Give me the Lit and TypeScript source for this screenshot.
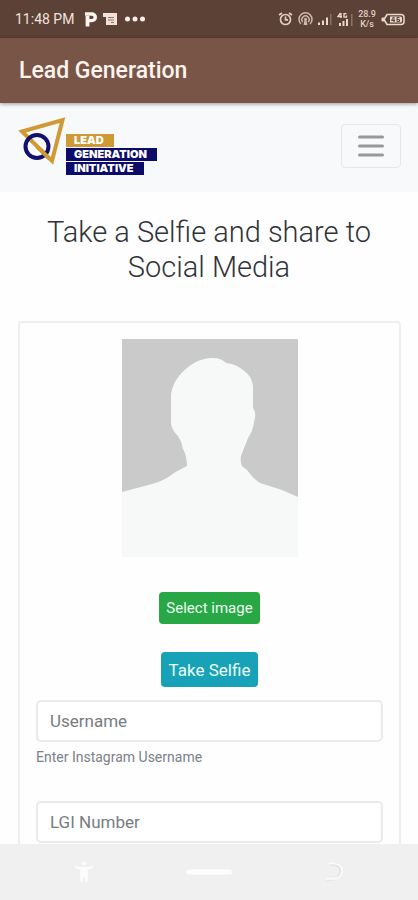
import { LitElement, html, css } from "lit";
import { customElement } from "lit/decorators.js";

@customElement("status-bar")
class StatusBar extends LitElement {
  static styles = css`
    :host {
      display: flex;
      justify-content: space-between;
      align-items: center;
      height: 38px;
      padding: 0 13px 0 15px;
      background: #5b4136;
      color: #f1e3dc;
      font-size: 14px;
    }
    .group { display: flex; align-items: center; gap: 6px; }
    .time { margin-right: 4px; }
    .right { gap: 5px; }
    .rate {
      font-size: 9px;
      line-height: 10px;
      font-weight: 500;
      text-align: center;
      color: #e0cec5;
    }
    svg { display: block; }
  `;
  render() {
    return html`
      <div class="group">
        <span class="time">11:48 PM</span>
        <svg width="13" height="15" viewBox="0 0 13 15" aria-hidden="true">
          <path d="M1 2H8a3.300 3.300 0 0 1 0 6.600H5" fill="none" stroke="#fff5ee" stroke-width="3.400" />
          <path d="M3.500 4v10.500" stroke="#fff5ee" stroke-width="3.800" />
        </svg>
        <svg width="14" height="13" viewBox="0 0 14 13" aria-hidden="true">
          <path d="M0 0h14v12H3V4H0z" fill="#f1e3dc" />
          <path d="M5 4.500h6M5 7h6M8 9.500h3" stroke="#8b6e60" stroke-width="1.200" />
        </svg>
        <svg width="24" height="6" viewBox="0 0 24 6" aria-hidden="true">
          <g fill="#fbeee6"><circle cx="4.500" cy="3" r="2.500" /><circle cx="12" cy="3" r="2.500" /><circle cx="19.500" cy="3" r="2.500" /></g>
        </svg>
      </div>
      <div class="group right">
        <svg width="15" height="14" viewBox="0 0 15 14" fill="none" stroke="#e0cec5" stroke-width="1.700" aria-hidden="true">
          <circle cx="7.500" cy="7.500" r="5" /><path d="M7.500 4.500v3.300h2.500M1 3l3-2M14 3l-3-2" />
        </svg>
        <svg width="15" height="14" viewBox="0 0 15 14" fill="none" stroke="#cdb9af" stroke-width="1.500" aria-hidden="true">
          <path d="M3 12a6.500 6.500 0 1 1 9 0M4.800 10a3.600 3.600 0 1 1 5.400 0" />
          <path d="M5.500 13l1-4.500a1.500 1.500 0 1 1 2 0l1 4.500z" fill="#cdb9af" stroke="none" />
        </svg>
        <svg width="14" height="12" viewBox="0 0 14 12" aria-hidden="true">
          <path d="M0 9.500h2V12H0zM4 7.500h2V12H4zM8 4.500h2V12H8z" fill="#ead9d0" />
          <path d="M12 1h1.500v11H12z" fill="#8b7266" />
        </svg>
        <svg width="16" height="15" viewBox="0 0 16 15" aria-hidden="true">
          <path d="M2 11h2v3H2zM5.500 9h2v5h-2zM9 7h2v7H9z" fill="#ead9d0" />
          <path d="M14 2h1.500v12H14z" fill="#8b7266" />
          <path d="M3.500 1L1 4.500h4M4 1v5M9.500 1.700H7v3.500h2.500V3.500" stroke="#ead9d0" stroke-width="1.300" fill="none" />
        </svg>
        <span class="rate">28.9<br />K/s</span>
        <svg width="24" height="13" viewBox="0 0 24 13" aria-hidden="true">
          <path d="M0.500 5.500a1 1 0 0 1 1-1H3v4H1.500a1 1 0 0 1-1-1z" fill="#ead9d0" />
          <path d="M3 6.500L6 1.500H20a3 3 0 0 1 3 3v4a3 3 0 0 1-3 3H6z" fill="#5b4136" stroke="#ead9d0" stroke-width="1.500" stroke-linejoin="round" />
          <path d="M9 3.500h10.500q1.500 0 1.500 1.500v3q0 1.500-1.500 1.500H9z" fill="#ead9d0" />
          <path d="M12.500 4l-2 3.500h3.500M13 4v5M18.500 4.500h-2.500v4h2.500v-2h-2.500" stroke="#5b4136" fill="none" />
        </svg>
      </div>
    `;
  }
}

@customElement("brand-logo")
class BrandLogo extends LitElement {
  static styles = css`
    :host { display: flex; align-items: flex-end; }
    svg { display: block; width: 48px; height: 48px; margin-bottom: 10px; }
    .words {
      display: flex;
      flex-direction: column;
      align-items: flex-start;
      gap: 1px;
      font: 900 11px/13px Inter, sans-serif;
      color: #fff;
    }
    .words span { background: #0d0b69; padding: 0 10px 0 8px; }
    .words .gold { background: #cf9a35; }
  `;
  render() {
    return html`
      <svg viewBox="0 0 48 48" fill="none" aria-hidden="true">
        <path d="M4 14.500L44.500 3 34 44z" stroke="#cf9a35" stroke-width="4" />
        <circle cx="19" cy="29.500" r="11.500" stroke="#11106c" stroke-width="4" />
        <path d="M19 29.500L31 41.300" stroke="#cf9a35" stroke-width="4" />
      </svg>
      <div class="words">
        <span class="gold">LEAD</span><span>GENERATION</span><span>INITIATIVE</span>
      </div>
    `;
  }
}

@customElement("app-root")
class AppRoot extends LitElement {
  static styles = css`
    :host {
      display: flex;
      flex-direction: column;
      height: 100vh;
      background: #fefefe;
      color: #303438;
      font-family: Roboto, sans-serif;
    }
    * { box-sizing: border-box; }
    .appbar {
      flex: none;
      display: flex;
      align-items: center;
      height: 65px;
      padding: 0 19px;
      background: #795548;
      color: #fff4ee;
      font-size: 23px;
      font-weight: 500;
      box-shadow: 0 1px 4px #0006;
      z-index: 1;
    }
    .page { flex: 1; min-height: 0; overflow-y: auto; scrollbar-width: none; }
    .navbar {
      display: flex;
      justify-content: space-between;
      align-items: center;
      height: 89px;
      padding: 0 17px 0 18px;
      background: #f8f9fa;
    }
    .logo { text-decoration: none; margin-bottom: 4px; }
    .toggler {
      display: grid;
      place-items: center;
      width: 60px;
      height: 44px;
      margin-bottom: 4px;
      padding: 0;
      background: none;
      border: 1px solid #e6e7e8;
      border-radius: 4px;
    }
    h1 {
      margin: 23px 18px 36px;
      font-size: 29px;
      line-height: 35px;
      font-weight: 300;
      text-align: center;
    }
    .card {
      display: flex;
      flex-direction: column;
      align-items: center;
      margin: 0 17px 24px 18px;
      padding: 16px 16px 24px;
      border: 2px solid #eeeeee;
      border-radius: 4px;
    }
    .photo { display: block; width: 176px; height: 218px; }
    .btn {
      border: 0;
      border-radius: 4px;
      color: #eefcf4;
      font-family: inherit;
    }
    .select { margin-top: 35px; height: 32px; padding: 0 7px; background: #28a745; font-size: 15px; }
    .selfie { margin: 28px 0 13px; height: 35px; padding: 0 8px; background: #17a2b8; font-size: 17px; }
    .field { display: flex; flex-direction: column; width: 100%; margin-bottom: 34px; }
    input {
      width: 100%;
      height: 42px;
      padding: 0 12px;
      border: 2px solid #e8eaeb;
      border-radius: 5px;
      background: #fff;
      font: 17px Roboto, sans-serif;
      color: #495057;
    }
    input::placeholder { color: #777c81; opacity: 1; }
    label { margin-top: 5px; font-size: 14px; line-height: 20px; color: #7a8189; }
    .system {
      flex: none;
      display: flex;
      justify-content: space-around;
      align-items: center;
      height: 56px;
      padding: 0 22px;
      background: #f0f0f0;
    }
    .key { display: grid; place-items: center; width: 48px; height: 40px; border: 0; padding: 0; background: none; }
  `;
  render() {
    return html`
      <status-bar></status-bar>
      <header class="appbar">Lead Generation</header>
      <main class="page">
        <nav class="navbar">
          <a class="logo" href="#" aria-label="Lead Generation Initiative"><brand-logo></brand-logo></a>
          <button class="toggler" aria-label="Menu">
            <svg width="26" height="22" viewBox="0 0 26 22" aria-hidden="true">
              <path d="M1.500 2h23M1.500 11h23M1.500 20h23" stroke="#979899" stroke-width="3" stroke-linecap="round" />
            </svg>
          </button>
        </nav>
        <h1>Take a Selfie and share to Social Media</h1>
        <form class="card">
          <svg class="photo" viewBox="0 0 176 218" role="img" aria-label="Profile photo">
            <path d="M0 0h176v218H0z" fill="#cacaca" />
            <path
              d="M0 153L30 145Q42 142 52 134Q59 130 65 127Q65 117 61 110Q60 103 56 97Q49 90 49 84V55Q51 44 57 37Q72 19 91 19Q99 19 104 24Q114 25 121 31Q130 37 131 47V69Q135 74 132 83Q131 92 126 99L119 117Q118 123 120 127Q126 131 129 136Q133 141 138 144L160 151L176 158V218H0z"
              fill="#f7f9f9"
            />
          </svg>
          <button type="button" class="btn select">Select image</button>
          <button type="button" class="btn selfie">Take Selfie</button>
          <div class="field">
            <input id="username" placeholder="Username" />
            <label for="username">Enter Instagram Username</label>
          </div>
          <div class="field">
            <input id="lgi" placeholder="LGI Number" aria-label="LGI Number" />
          </div>
        </form>
      </main>
      <footer class="system">
        <button class="key" aria-label="Accessibility">
          <svg width="20" height="22" viewBox="0 0 20 22" fill="#fcfcfc" aria-hidden="true">
            <circle cx="10" cy="2.500" r="2" />
            <path d="M1 5l6 1h6l6-1v2l-5 1.500L13.500 21H11v-5H9v5H6.500L6 8.500 1 7z" />
          </svg>
        </button>
        <button class="key" aria-label="Home">
          <svg width="48" height="6" viewBox="0 0 48 6" aria-hidden="true">
            <path d="M3.500 3h41" stroke="#fdfdfd" stroke-width="5" stroke-linecap="round" />
          </svg>
        </button>
        <button class="key" aria-label="Back">
          <svg width="20" height="20" viewBox="0 0 20 20" fill="none" aria-hidden="true">
            <path d="M6 3h4q6 1 6 6t-6 9H2" stroke="#dedede" stroke-width="1.200" />
            <path d="M5 1.500h5q8 1 8 7T11 17H2" stroke="#fbfbfb" stroke-width="1.500" />
          </svg>
        </button>
      </footer>
    `;
  }
}
